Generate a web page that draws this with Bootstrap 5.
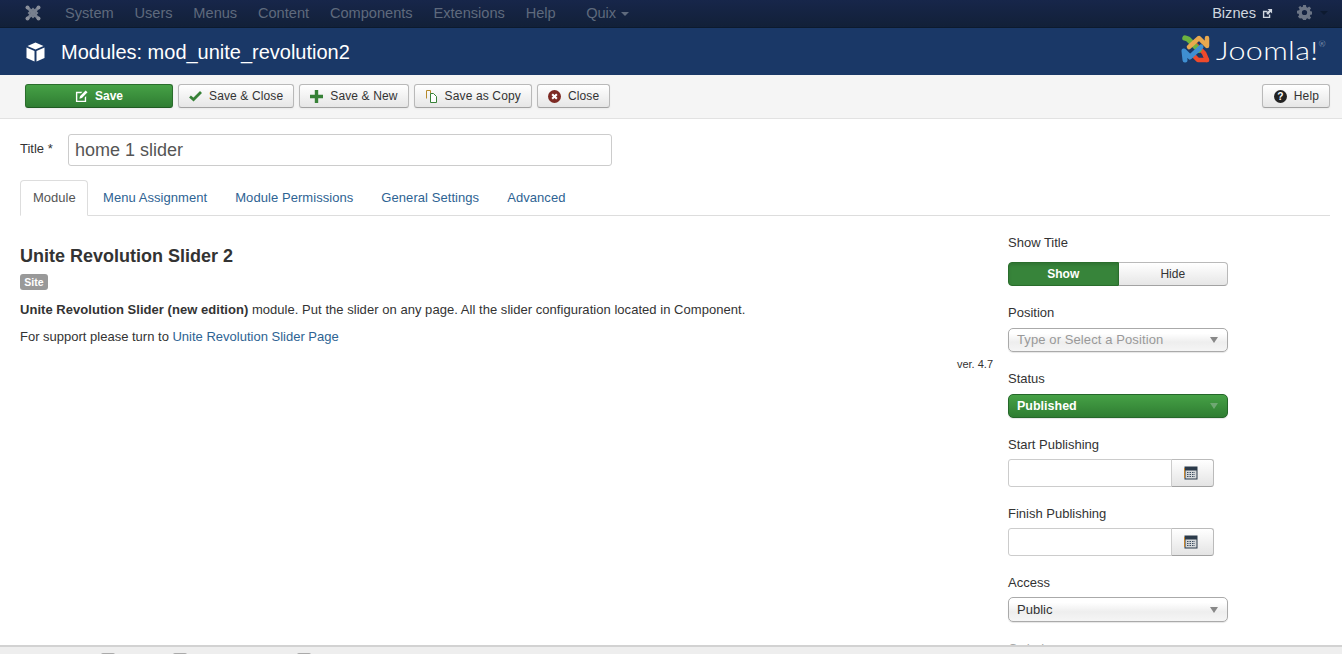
<!DOCTYPE html>
<html lang="en"><head><meta charset="utf-8"><title>Modules: mod_unite_revolution2</title>
<link rel="stylesheet" href="https://cdn.jsdelivr.net/npm/bootstrap@5.3.0/dist/css/bootstrap.min.css">
<style>
html,body{height:654px;overflow:hidden}
body{font-family:"Liberation Sans",Arial,sans-serif;font-size:13px;line-height:18px;color:#333;background:#fff}
a{text-decoration:none}
.topbar{height:28px;padding:0 0 2px;background:linear-gradient(#17264a,#122038);border-bottom:1px solid #0c1a2e;flex-wrap:nowrap;justify-content:flex-start}
.toplogo{width:16px;height:16px;margin:0 24px 0 25px;flex:none}
.toplink{color:#5f6a7d;font-size:14.6px;line-height:18px;white-space:nowrap}
.topmenu{gap:20.8px}
.quix{margin-left:30.5px;margin-right:auto}
.caretmark{display:inline-block;border-left:4px solid transparent;border-right:4px solid transparent;border-top:4px solid currentColor;vertical-align:middle;margin-left:5px}
.bizlink{color:#d0d6df;font-size:14.6px;margin-right:24px}
.bizlink svg{margin-left:2px}
.gearwrap{color:#6c7585;margin-right:14px;display:flex;align-items:center}
.gearwrap .caretmark{color:#0d1a30;margin-left:8px}
.headbar{height:47px;background:#1a3867;padding:0 12px 0 26px}
.headtitle{color:#fff;font-size:20px;line-height:24px;font-weight:400;margin:0 0 0 16px;letter-spacing:-.01px}
.joomla-mark{display:flex;align-items:center;margin-left:auto;color:#fff;margin-top:-3px;margin-right:4px}
.joomla-word{display:inline-block;width:110px;font-family:"Lato","Liberation Sans",sans-serif;font-size:25px;font-weight:300;line-height:32px;letter-spacing:.3px;margin-left:3px;white-space:nowrap;transform:scaleX(1.22);transform-origin:left center}
.joomla-word sup{font-size:7px;top:-13px;color:#b9c4d4}
.toolstrip{height:44px;background:#f5f5f5;border-bottom:1px solid #e2e2e2;padding:9px 12px 0 25px;gap:5px}
.tbtn{height:24px;padding:0 10px 0 10px;font-size:12px;line-height:22px;letter-spacing:.13px;color:#333;border:1px solid #b9b9b9;border-bottom-color:#a2a2a2;border-radius:3px;background:linear-gradient(#fff,#e6e6e6);display:inline-flex;align-items:center;justify-content:center;white-space:nowrap;box-shadow:0 1px 2px rgba(0,0,0,.05)}
.tbtn svg{margin-right:7px;flex:none}
.tsave{width:148px;color:#fff;font-weight:700;letter-spacing:0;background:linear-gradient(#46a146,#2f7d32);border-color:#2a6d2c #2a6d2c #1f5a22}
.thelp{margin-left:auto;padding-left:11px}
.pagebody{padding:15px 12px 0 20px}
.titlerow{height:32px;display:flex;align-items:center}
.titlelabel{width:48px;margin-top:-3px}
.titleinput{width:544px;height:32px;font-size:18px;line-height:24px;padding:3px 6px;color:#555;border:1px solid #ccc;border-radius:3px}
.modtabs{margin-top:14px;border-bottom:1px solid #ddd;height:36px}
.modtabs .nav-link{padding:8px 12px;height:36px;line-height:18px;font-size:13px;letter-spacing:.06px;color:#2e6393;border:1px solid transparent;border-radius:4px 4px 0 0;margin-right:2px}
.modtabs .nav-link.active{color:#555;border-color:#ddd #ddd #fff;background:#fff;width:68px;letter-spacing:0;white-space:nowrap}
.split{margin-top:17px;display:flex}
.mainpane{width:973px;flex:none;padding-top:13px}
.sidepane{margin-left:15px;width:221px;flex:none}
.modname{font-size:18px;line-height:20px;font-weight:700;margin:0 0 8px}
.sitebadge{display:block;width:28px;height:16px;background:#999;color:#fff;font-size:10.5px;line-height:16px;font-weight:700;text-align:center;border-radius:3px;padding:0}
.mainpane p{margin:0 0 9px;line-height:18px}
.desc{margin-top:11px!important;letter-spacing:.04px}
.mainpane a{color:#2e6393}
.verline{font-size:11px;line-height:14px;text-align:right;margin-top:11px}
.fieldlabel{display:block;line-height:18px;padding-top:1px;margin:0 0 6px;color:#333}
.labelwide{margin-bottom:10px}
.labeltight{margin-bottom:5px}
.fieldgap{margin-bottom:17px}
.segs{display:flex;width:220px;height:24px}
.segs div{flex:1;display:flex;align-items:center;justify-content:center;border:1px solid #b9b9b9;border-bottom-color:#a2a2a2;background:linear-gradient(#fff,#e6e6e6);font-size:12px;border-radius:0 4px 4px 0;border-left:0}
.segs .segon{background:#37843a;color:#fff;font-weight:700;border:1px solid #2a6d2c;border-radius:4px 0 0 4px;box-shadow:inset 0 2px 3px rgba(0,0,0,.12)}
.chosen{width:220px;height:24px;display:flex;align-items:center;justify-content:space-between;padding:0 8px;border:1px solid #aaa;border-radius:5px;background:linear-gradient(#fff 20%,#eee 60%,#f5f5f5);box-shadow:0 1px 1px rgba(0,0,0,.1)}
.chosen .caretmark{border-left-width:4px;border-right-width:4px;border-top-width:6px;color:#888;margin:0 1px 0 0}
.chosen.placeholder-look{color:#999;letter-spacing:.1px}
.chosen.greenpick{color:#fff;font-weight:700;font-size:12.5px;background:linear-gradient(#46a146,#2f7d32);border-color:#25672a}
.chosen.greenpick .caretmark{color:#6fa873}
.chosen.tallpick{height:25px}
.dategroup{width:207px;height:28px;flex-wrap:nowrap}
.dategroup .form-control{height:28px;width:164px;flex:none;border:1px solid #ccc;border-radius:3px 0 0 3px;padding:0 6px;min-height:0}
.calbtn{width:43px;height:28px;padding-right:4px;border:1px solid #bbb;border-left:1px solid #ccc;border-bottom-color:#a2a2a2;border-radius:0 3px 3px 0;background:linear-gradient(#fff,#e4e4e4);display:flex;align-items:center;justify-content:center;margin-left:0}
.fadelabel{color:#aaa}
.footstrip{position:fixed;left:0;right:0;bottom:0;height:9px;background:#eee;border-top:2px solid #d2d2d2;overflow:hidden}
.footknob{position:absolute;top:6px;width:14px;height:8px;background:#aaa;border-radius:2px}
</style></head><body>

<nav class="navbar topbar d-flex align-items-center">
<svg class="toplogo" viewBox="0 0 16 16"><g fill="none" stroke="#78808f" stroke-width="3" stroke-linecap="round"><path d="M2.5 2.500 13 13"/><path d="M13.500 2.500 3 13"/><path d="M8 4 4 8l4 4 4-4z" stroke-width="2"/></g><g fill="#8a8f9b"><circle cx="2.500" cy="2.500" r="2"/><circle cx="13.500" cy="2.500" r="2"/><circle cx="2.500" cy="13.500" r="2"/><circle cx="13.500" cy="13.500" r="2"/></g></svg>
<div class="d-flex topmenu">
<a class="toplink" href="#">System</a><a class="toplink" href="#">Users</a><a class="toplink" href="#">Menus</a><a class="toplink" href="#">Content</a><a class="toplink" href="#">Components</a><a class="toplink" href="#">Extensions</a><a class="toplink" href="#">Help</a>
</div>
<a class="toplink quix" href="#">Quix<span class="caretmark"></span></a>
<a class="bizlink" href="#">Biznes <svg width="11" height="11" viewBox="0 0 12 12"><path d="M1 3h5v1.500H2.500v5h5V7H9v4H1z" fill="#d0d6df"/><path d="M6 1h5v5L9.300 4.300 6.500 7.500 4.500 5.500 7.700 2.700z" fill="#d0d6df"/></svg></a>
<span class="gearwrap"><svg width="15" height="15" viewBox="0 0 16 16"><path fill="#6c7585" fill-rule="evenodd" d="M6.500 0h3l.4 2.200 1.300.6L13 1.500l2 2-1.300 1.900.6 1.300 2.200.3v3l-2.200.4-.6 1.300 1.300 1.800-2 2-1.900-1.300-1.300.6-.3 2.200h-3l-.4-2.200-1.300-.6L3 14.500l-2-2 1.300-1.800-.6-1.300L0 9V6l2.200-.3.6-1.300L1.500 2.500l2-1.500 1.400 1.300 1.300-.5zM8 5.200a2.800 2.800 0 1 0 0 5.600 2.800 2.800 0 0 0 0-5.600z"/></svg><span class="caretmark"></span></span>
</nav>

<header class="headbar d-flex align-items-center">
<svg width="19" height="20" viewBox="0 0 19 20"><path fill="#fff" d="M9.500 0.500 17.500 4 9.500 7.500 1.500 4zM0.500 5.500 8.500 9v10.500L0.500 16zM18.500 5.500 10.500 9v10.500l8-3.500z"/></svg>
<h1 class="headtitle">Modules: mod_unite_revolution2</h1>
<div class="joomla-mark">
<svg width="32" height="32" viewBox="1 1 32 32" fill="none" stroke-width="4.500" stroke-linecap="round" stroke-linejoin="round">
<path d="M27 27l-3-7-9-9" stroke="#ee4a2b"/><path d="M27 27l-9 0-5-5" stroke="#ee4a2b"/>
<path d="M5 5l3 1 11 11" stroke="#6cb33f" stroke-width="5.500"/>
<path d="M27 5l0 8-6-6-2-2-10 9" stroke="#e9a94f"/>
<path d="M5 27l-1-9 6 6 11-10" stroke="#3f8fd2" stroke-width="5"/>
</svg>
<span class="joomla-word">Joomla!<sup>®</sup></span>
</div>
</header>

<div class="toolstrip d-flex">
<button class="tbtn tsave" type="button"><svg width="13" height="13" viewBox="0 0 14 14"><path fill="#fff" d="M1 2h7L6.500 3.500h-4v8h8V8L12 6.500V13H1z"/><path fill="#fff" d="M11.500 0.500l2 2-6 6-2.800.8.800-2.800z"/></svg>Save</button>
<button class="tbtn" type="button"><svg width="13" height="12" viewBox="0 0 13 12"><path fill="none" stroke="#378137" stroke-width="2.800" d="M1 6.500l3.500 3L12 2"/></svg>Save &amp; Close</button>
<button class="tbtn" type="button"><svg width="13" height="13" viewBox="0 0 13 13"><path fill="#378137" d="M4.800 0h3.400v4.800H13v3.400H8.200V13H4.800V8.200H0V4.800h4.800z"/></svg>Save &amp; New</button>
<button class="tbtn" type="button"><svg width="13" height="13" viewBox="0 0 13 13"><path fill="none" stroke="#b58a2c" d="M1.500 8.500v-8h4v3h2"/><path fill="#fff" stroke="#378137" d="M5.500 3.500h3l3 3v6h-6z"/></svg>Save as Copy</button>
<button class="tbtn" type="button"><svg width="13" height="13" viewBox="0 0 14 14"><circle cx="7" cy="7" r="7" fill="#7d2a23"/><path stroke="#fff" stroke-width="2.200" d="M4.500 4.500l5 5M9.500 4.500l-5 5"/></svg>Close</button>
<button class="tbtn thelp" type="button"><svg width="13" height="13" viewBox="0 0 14 14"><circle cx="7" cy="7" r="7" fill="#222"/><text x="7" y="11" text-anchor="middle" fill="#fff" font-size="11" font-weight="700" font-family="Liberation Sans">?</text></svg>Help</button>
</div>

<main class="pagebody">
<div class="titlerow"><label class="titlelabel" for="modtitle">Title *</label><input id="modtitle" class="form-control titleinput" value="home 1 slider"></div>
<ul class="nav nav-tabs modtabs">
<li class="nav-item"><a class="nav-link active" href="#">Module</a></li>
<li class="nav-item"><a class="nav-link" href="#">Menu Assignment</a></li>
<li class="nav-item"><a class="nav-link" href="#">Module Permissions</a></li>
<li class="nav-item"><a class="nav-link" href="#">General Settings</a></li>
<li class="nav-item"><a class="nav-link" href="#">Advanced</a></li>
</ul>
<div class="split">
<section class="mainpane">
<h2 class="modname">Unite Revolution Slider 2</h2>
<span class="sitebadge">Site</span>
<p class="desc"><strong>Unite Revolution Slider (new edition)</strong> module. Put the slider on any page. All the slider configuration located in Component.</p>
<p>For support please turn to <a href="#">Unite Revolution Slider Page</a></p>
<div class="verline">ver. 4.7</div>
</section>
<aside class="sidepane">
<div class="fieldgap"><span class="fieldlabel labelwide">Show Title</span><div class="segs"><div class="segon">Show</div><div>Hide</div></div></div>
<div class="fieldgap"><span class="fieldlabel">Position</span><div class="chosen placeholder-look"><span>Type or Select a Position</span><span class="caretmark"></span></div></div>
<div class="fieldgap"><span class="fieldlabel">Status</span><div class="chosen greenpick"><span>Published</span><span class="caretmark"></span></div></div>
<div class="fieldgap"><span class="fieldlabel labeltight">Start Publishing</span><div class="input-group dategroup"><input class="form-control" aria-label="Start Publishing"><span class="calbtn"><svg width="14" height="14" viewBox="0 0 14 14"><rect x="1" y="1" width="12" height="12" fill="#d5d8da" stroke="#2b3a4a"/><rect x="1" y="1" width="12" height="3.500" fill="#2b3a4a"/><path stroke="#3b4d60" stroke-dasharray="1.500 1" d="M3 6.500h8M3 8.500h8M3 10.500h8"/><path stroke="#c8842a" d="M.5 2v10"/></svg></span></div></div>
<div class="fieldgap"><span class="fieldlabel labeltight">Finish Publishing</span><div class="input-group dategroup"><input class="form-control" aria-label="Finish Publishing"><span class="calbtn"><svg width="14" height="14" viewBox="0 0 14 14"><rect x="1" y="1" width="12" height="12" fill="#d5d8da" stroke="#2b3a4a"/><rect x="1" y="1" width="12" height="3.500" fill="#2b3a4a"/><path stroke="#3b4d60" stroke-dasharray="1.500 1" d="M3 6.500h8M3 8.500h8M3 10.500h8"/><path stroke="#c8842a" d="M.5 2v10"/></svg></span></div></div>
<div class="fieldgap"><span class="fieldlabel labeltight">Access</span><div class="chosen tallpick"><span>Public</span><span class="caretmark"></span></div></div>
<div><span class="fieldlabel fadelabel">Ordering</span></div>
</aside>
</div>
</main>

<footer class="footstrip"><span class="footknob" style="left:101px"></span><span class="footknob" style="left:173px"></span><span class="footknob" style="left:297px"></span></footer>
</body></html>
